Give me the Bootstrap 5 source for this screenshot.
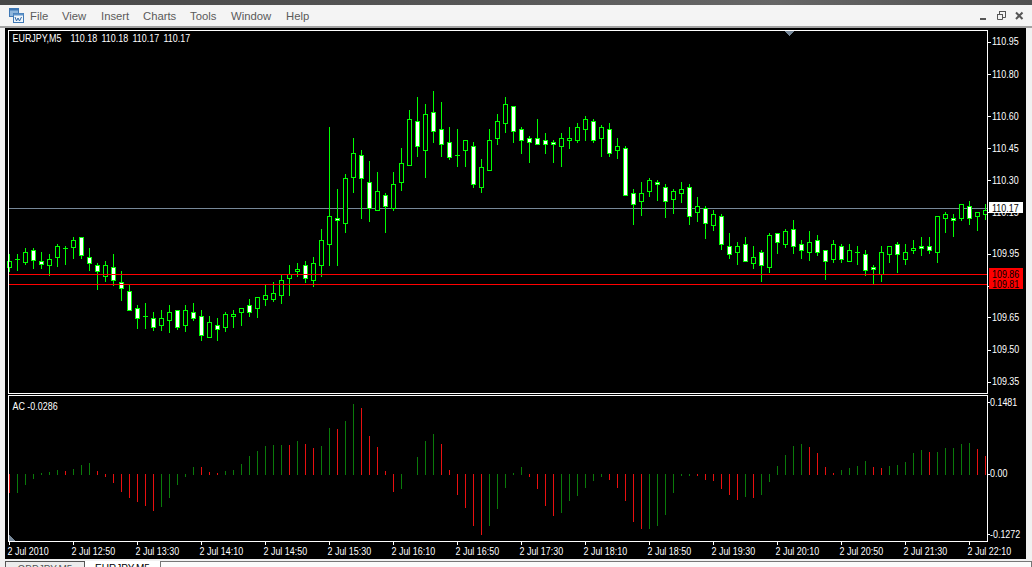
<!doctype html>
<html lang="en">
<head>
<meta charset="utf-8">
<title>EURJPY,M5</title>
<link href="https://cdn.jsdelivr.net/npm/bootstrap@5.3.0/dist/css/bootstrap.min.css" rel="stylesheet">
<style>
html,body{height:567px;overflow:hidden;}
body{background:#f1f1f1;font-family:"Liberation Sans",Arial,sans-serif;}
.app-shell{width:1032px;height:567px;overflow:hidden;}
.title-strip{height:5px;flex:none;background:linear-gradient(90deg,#474747,#565656 45%,#666 75%,#505050);}
.menu-strip{height:21px;flex:none;background:#f4f4f4;padding:0 8px 0 9px!important;}
.menu-strip.navbar-expand .navbar-nav .nav-link{font-size:11.3px;line-height:20px;padding:0;color:#5a5a5a;}
.app-mark{width:15px;height:16px;display:block;}
.menu-list{margin-left:6px;}
.menu-item-file{width:32px}.menu-item-view{width:39px}.menu-item-insert{width:42px}.menu-item-charts{width:47px}.menu-item-tools{width:41px}.menu-item-window{width:55px}
.win-controls{width:44px;height:14px;display:block;}
.menu-rule{height:2px;flex:none;background:#a2a2a2;}
.chart-row{height:531px;flex:none;padding:0 6px 0 5px;}
.chart-canvas{display:block;width:1021px;height:531px;background:#000;}
.chart-canvas text{font-family:"Liberation Sans",Arial,sans-serif;font-size:10.5px;fill:#fff;}
.chart-canvas text.on-tag{fill:#000;}
.tab-row{height:8px;flex:none;padding:2px 0 0 5px;}
.tab-item{height:20px;font-size:10px;line-height:15px;text-align:center;}
.tab-first{width:80px;color:#555;background:#ececec;border:1px solid #555;border-bottom:0;}
.tab-active{width:75px;color:#000;background:#fff;}
.tab-rest{flex:1;background:#fbfbfb;border:1px solid #777;border-bottom:0;}
</style>
</head>
<body>
<div class="app-shell d-flex flex-column">
  <div class="title-strip"></div>
  <nav class="menu-strip navbar navbar-expand d-flex align-items-center">
    <svg class="app-mark" viewBox="0 0 15 16" aria-hidden="true">
      <rect x="0.5" y="0.5" width="9" height="8" fill="#8fb6dc" stroke="#3f78b5"/>
      <rect x="0.5" y="0.5" width="9" height="2" fill="#3f78b5"/>
      <rect x="4.5" y="5.5" width="10" height="9" fill="#eef5fb" stroke="#3f78b5"/>
      <rect x="4.5" y="5.5" width="10" height="2" fill="#5f93c9"/>
      <path d="M6 9l1.5 4 1.5-3 1.5 3 2-4" fill="none" stroke="#2f67a6"/>
    </svg>
    <ul class="navbar-nav menu-list flex-row">
      <li class="nav-item menu-item-file"><a class="nav-link" href="#">File</a></li>
      <li class="nav-item menu-item-view"><a class="nav-link" href="#">View</a></li>
      <li class="nav-item menu-item-insert"><a class="nav-link" href="#">Insert</a></li>
      <li class="nav-item menu-item-charts"><a class="nav-link" href="#">Charts</a></li>
      <li class="nav-item menu-item-tools"><a class="nav-link" href="#">Tools</a></li>
      <li class="nav-item menu-item-window"><a class="nav-link" href="#">Window</a></li>
      <li class="nav-item"><a class="nav-link" href="#">Help</a></li>
    </ul>
    <svg class="win-controls ms-auto" viewBox="0 0 44 14" aria-hidden="true">
      <rect x="0" y="9" width="6" height="2" fill="#555"/>
      <path d="M17.5 5.5h5v5h-5zM19.5 5.5v-3h6v6h-3" fill="none" stroke="#555"/>
      <rect x="17" y="5" width="6" height="1" fill="#555"/>
      <rect x="19" y="2" width="7" height="1" fill="#555"/>
      <path d="M36 3.5l6.5 6.5M42.5 3.5l-6.5 6.5" stroke="#555" stroke-width="2" fill="none"/>
    </svg>
  </nav>
  <div class="menu-rule"></div>
  <div class="chart-row">
    <svg id="chart" class="chart-canvas" viewBox="5 28 1021 531" shape-rendering="crispEdges"></svg>
  </div>
  <div class="tab-row d-flex">
    <div class="tab-item tab-first">GBPJPY,M5</div>
    <div class="tab-item tab-active">EURJPY,M5</div>
    <div class="tab-rest"></div>
  </div>
</div>
<script>
// wick top, wick bottom, body top, body bottom, 1 = white body
var C=[[254,271,261,267,0],[254,270,259,259,0],[248,264,252,262,0],[248,268,250,260,1],[252,268,261,264,1],[254,275,259,265,0],[244,266,246,257,0],[246,264,248,248,0],[237,258,240,247,0],[237,258,237,255,1],[248,270,257,263,1],[263,289,265,271,1],[261,281,265,276,0],[254,285,267,280,1],[271,300,282,288,1],[284,310,291,310,1],[305,328,308,318,1],[303,328,316,316,0],[312,330,318,327,1],[310,330,318,325,0],[305,332,312,320,0],[310,329,310,327,1],[305,331,310,325,0],[303,320,312,318,1],[310,340,316,335,1],[316,337,322,337,0],[318,340,325,329,1],[312,331,314,327,0],[310,327,314,316,0],[308,325,308,312,0],[299,316,305,312,1],[297,317,297,308,0],[284,305,295,299,0],[282,301,293,299,0],[274,303,280,295,0],[265,295,274,278,0],[263,276,269,271,0],[261,282,265,278,1],[257,286,263,280,0],[229,276,240,265,0],[127,265,216,244,0],[189,265,218,220,1],[174,232,178,223,0],[138,192,153,177,0],[150,218,155,178,1],[161,221,182,208,1],[172,210,191,210,0],[193,232,195,206,1],[172,210,184,208,0],[148,190,163,182,0],[110,165,119,165,0],[97,156,121,146,1],[104,177,114,150,0],[91,142,112,131,1],[102,156,129,144,1],[127,159,142,157,1],[129,166,155,155,0],[140,166,140,150,0],[142,187,146,184,1],[159,192,167,187,0],[129,170,140,170,0],[114,144,121,138,0],[97,132,104,123,0],[106,142,106,131,1],[127,153,129,140,1],[136,162,138,142,1],[119,144,138,144,1],[133,153,140,144,1],[140,162,142,144,1],[133,166,138,146,0],[127,148,138,140,0],[123,142,127,140,0],[116,140,119,129,0],[119,142,121,140,1],[125,156,127,138,0],[123,156,129,153,1],[138,158,146,150,0],[146,195,148,195,1],[189,224,193,204,1],[182,215,193,201,0],[178,196,180,191,0],[180,200,182,184,1],[184,217,187,201,1],[189,213,191,199,0],[182,202,189,193,0],[184,224,187,216,1],[197,221,206,212,0],[206,238,208,223,1],[210,230,214,225,0],[214,249,216,244,1],[233,258,246,254,1],[242,264,246,252,0],[237,261,244,261,1],[246,268,257,263,0],[250,281,252,265,1],[233,272,235,267,0],[233,253,233,242,1],[229,247,231,244,0],[220,253,229,246,1],[240,258,244,250,1],[231,260,242,252,0],[235,255,240,252,1],[250,279,250,261,1],[240,262,244,259,0],[244,262,246,259,1],[244,261,250,261,0],[246,264,252,252,0],[250,275,254,270,1],[265,283,267,269,1],[246,281,252,274,0],[246,262,246,254,0],[242,272,244,254,1],[244,264,252,259,0],[240,253,248,250,0],[237,255,246,248,1],[237,253,246,250,1],[216,262,216,252,0],[212,232,214,218,0],[214,236,218,220,1],[204,220,204,218,0],[201,224,206,218,1],[212,230,212,216,0],[204,219,210,214,0]];
// tip of each AC bar; g = green, r = red
var A="492r 492g 484g 478g 473g 472g 470g 471r 469g 465g 463g 471r 476r 482r 491r 497r 501r 505r 510r 506g 497g 484g 476g 467g 467r 472r 473r 471g 470g 464g 456g 451g 446g 445g 445g 445r 441g 444r 448r 446g 428g 429r 421g 404g 408r 436r 447r 471r 491r 488g 0g 457g 441g 434g 444r 470r 494r 507r 525r 534r 525g 508g 487g 473g 467g 476r 488r 505r 515r 512g 500g 495g 487g 480g 476g 479r 487r 500r 521r 528r 528g 525g 514g 492g 475g 475g 475r 479r 480r 488r 494r 499r 496g 497r 494g 481g 466g 455g 446g 444g 447r 453r 467r 473r 470g 468g 466g 461g 467r 468r 466g 465g 462g 453g 450g 452r 452g 448g 448g 444g 443g 449r 456r".split(" ");
var s=[];
function L(x1,y1,x2,y2,c){s.push('<line x1="'+x1+'" y1="'+y1+'" x2="'+x2+'" y2="'+y2+'" stroke="'+c+'"/>');}
function T(x,y,t,cls){s.push('<text transform="translate('+x+','+y+') scale(.85,1)" shape-rendering="auto"'+(cls?' class="'+cls+'"':'')+'>'+t+'</text>');}
var LIME="#00ff00",WH="#ffffff";
// reference lines under the candles
L(9,208.5,987,208.5,"#778899");
C.forEach(function(c,k){
  var x=9+8*k;
  L(x+.5,c[0],x+.5,c[1]+1,LIME);
  if(c[2]===c[3]){L(x-2,c[2]+.5,x+3,c[2]+.5,LIME);}
  else s.push('<rect x="'+(x-1.5)+'" y="'+(c[2]+.5)+'" width="4" height="'+(c[3]-c[2])+'" fill="'+(c[4]?WH:"#000")+'" stroke="'+LIME+'"/>');
});
L(9,274.5,987,274.5,"#ff0000");
L(9,284.5,987,284.5,"#ff0000");
A.forEach(function(a,k){
  var y=parseInt(a,10);if(!y)return;
  var c=a.slice(-1)==="r"?"#e81010":"#0a7a0a",x=9.5+8*k;
  if(y<475)L(x,y,x,475,c);else L(x,474,x,y+1,c);
});
// frames
s.push('<rect x="8.5" y="30.5" width="979" height="363" fill="none" stroke="#fff"/>');
s.push('<rect x="8.5" y="395.5" width="979" height="146" fill="none" stroke="#fff"/>');
// shift markers
s.push('<polygon points="785,31 794,31 789.5,36" fill="#778899"/>');
s.push('<polygon points="9,535 9,541 15,541" fill="#778899"/>');
// legends
T(12.5,42,"EURJPY,M5");
["110.18","110.18","110.17","110.17"].forEach(function(t,i){T(70.5+31*i,42,t);});
T(12.5,409.5,"AC -0.0286");
// price axis
[["110.95",41.5],["110.80",74],["110.60",116],["110.45",148],["110.30",180],["109.95",253.5],["109.65",317],["109.50",349.5],["109.35",381.5]].forEach(function(p){
  L(988,Math.round(p[1])+.5,991,Math.round(p[1])+.5,WH);
  T(992,p[1]+3.8,p[0]);
});
T(992,216,"110.15");
L(988,212.5,991,212.5,WH);L(988,286.5,991,286.5,WH);
s.push('<rect x="989" y="202" width="34" height="11" fill="#fff"/>');
T(992,211.6,"110.17","on-tag");
s.push('<rect x="989" y="268" width="34" height="21" fill="#ff0000"/>');
T(992,277.5,"109.86","on-tag");
T(992,287.5,"109.81","on-tag");
[["0.1481",402],["0.00",473.5],["-0.1272",534]].forEach(function(p){
  L(988,Math.round(p[1])+.5,990,Math.round(p[1])+.5,WH);
  T(990,p[1]+3.8,p[0]);
});
// time axis
["2 Jul 2010","2 Jul 12:50","2 Jul 13:30","2 Jul 14:10","2 Jul 14:50","2 Jul 15:30","2 Jul 16:10","2 Jul 16:50","2 Jul 17:30","2 Jul 18:10","2 Jul 18:50","2 Jul 19:30","2 Jul 20:10","2 Jul 20:50","2 Jul 21:30","2 Jul 22:10"].forEach(function(t,i){
  L(9.5+64*i,542,9.5+64*i,545,WH);
  T(7.5+64*i,554.5,t.replace(/ /g,"\u00a0"));
});
document.getElementById("chart").innerHTML=s.join("");
</script>
<script src="https://cdn.jsdelivr.net/npm/bootstrap@5.3.0/dist/js/bootstrap.bundle.min.js"></script>
</body>
</html>
